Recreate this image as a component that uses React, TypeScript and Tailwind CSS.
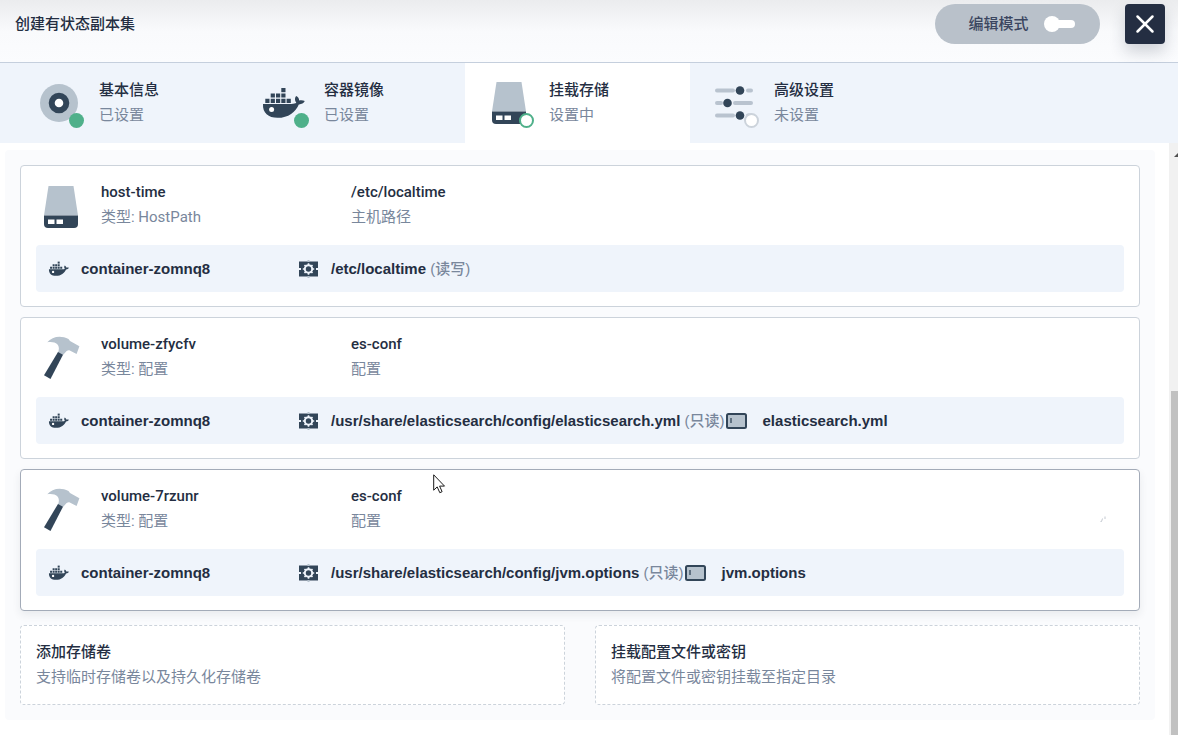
import type { ReactNode } from "react";
import { X } from "lucide-react";

type StepStatus = "done" | "current" | "todo";

const steps: { title: string; desc: string; status: StepStatus; icon: ReactNode }[] = [
  { title: "基本信息", desc: "已设置", status: "done", icon: <InfoIcon /> },
  {
    title: "容器镜像",
    desc: "已设置",
    status: "done",
    icon: <DockerIcon className="w-11 h-[31px] -ml-1" />,
  },
  { title: "挂载存储", desc: "设置中", status: "current", icon: <DiskIcon className="ml-0.5" /> },
  { title: "高级设置", desc: "未设置", status: "todo", icon: <SlidersIcon /> },
];

const volumes = [
  {
    name: "host-time",
    type: "类型: HostPath",
    source: "/etc/localtime",
    sourceDesc: "主机路径",
    icon: "disk",
    path: "/etc/localtime",
    mode: "(读写)",
    file: "",
    hover: false,
  },
  {
    name: "volume-zfycfv",
    type: "类型: 配置",
    source: "es-conf",
    sourceDesc: "配置",
    icon: "hammer",
    path: "/usr/share/elasticsearch/config/elasticsearch.yml",
    mode: "(只读)",
    file: "elasticsearch.yml",
    hover: false,
  },
  {
    name: "volume-7rzunr",
    type: "类型: 配置",
    source: "es-conf",
    sourceDesc: "配置",
    icon: "hammer",
    path: "/usr/share/elasticsearch/config/jvm.options",
    mode: "(只读)",
    file: "jvm.options",
    hover: true,
  },
];

const actions = [
  { title: "添加存储卷", desc: "支持临时存储卷以及持久化存储卷" },
  { title: "挂载配置文件或密钥", desc: "将配置文件或密钥挂载至指定目录" },
];

const statusClass: Record<StepStatus, string> = {
  done: "bg-[#4fb08a]",
  current: "bg-white border-2 border-[#4fb08a]",
  todo: "bg-white border-2 border-[#ccd3db]",
};

function InfoIcon() {
  return (
    <svg width="38" height="38" viewBox="0 0 38 38">
      <circle cx="19" cy="19" r="19" fill="#b6c2cd" />
      <circle cx="19" cy="19" r="7.3" fill="#fff" stroke="#324558" strokeWidth="6" />
    </svg>
  );
}

function DockerIcon({ className = "" }: { className?: string }) {
  return (
    <svg className={`shrink-0 ${className}`} viewBox="0 0 44 31" fill="#324558">
      <path d="M20.3 0h4.2v4.2h-4.2z" />
      <path d="M9.7 5.4h4.2v4.2H9.7zM15 5.4h4.2v4.2H15zM20.3 5.4h4.2v4.2h-4.2z" />
      <path d="M4.3 10.7h4.2v4.2H4.3zM9.7 10.7h4.2v4.2H9.7zM15 10.7h4.2v4.2H15zM20.3 10.7h4.2v4.2h-4.2zM25.6 10.7h4.2v4.2h-4.2z" />
      <path d="M2 16h28.5c2.2 0 3.9-.5 4.8-1.2-1.8-2.2-1.7-4.8-.2-6.7 2 1 3 2.5 3.1 4.3 2-.5 4-.3 5.6.7-1.2 2.3-3.4 3.4-6 3.3C34.6 24 27.5 29.8 16.5 29.8 7.5 29.8 1.400 25 2 16z" />
      <circle cx="10.6" cy="21.6" r="2.500" fill="#fff" />
    </svg>
  );
}

function DiskIcon({ className = "" }: { className?: string }) {
  return (
    <svg className={className} width="34" height="42" viewBox="0 0 34 42">
      <path d="M4.5 0h25L34 29.5H0z" fill="#b6c2cd" />
      <path d="M0 29.5h34V38a4 4 0 0 1-4 4H4a4 4 0 0 1-4-4z" fill="#324558" />
      <path d="M4 33.5h6.500v4.500H4zM12.500 33.500H19v4.500h-6.500z" fill="#fff" />
    </svg>
  );
}

function SlidersIcon() {
  return (
    <svg width="38" height="36" viewBox="0 0 38 36">
      <g stroke="#b9c3cf" strokeWidth="4" strokeLinecap="round">
        <path d="M2 5.500h16M33 5.500h3M2 18h4M20 18h16M2 30.500h16M33 30.500h3" />
      </g>
      <g fill="#324558">
        <circle cx="25" cy="5.500" r="4.300" />
        <circle cx="12.500" cy="18" r="4.300" />
        <circle cx="25" cy="30.500" r="4.300" />
      </g>
    </svg>
  );
}

function HammerIcon() {
  return (
    <svg className="ml-0.5" width="36" height="43" viewBox="0 0 36 43">
      <path
        d="M3.300 6.300C8 .8 16.500-1 24.500 3l1.500 2 9.400 5.300-2.800 7.700-7.300-3.700c-1.500-.3-2.600.7-3.600 1.700l-2.700 3-5-2.500C16 12 15.500 4.800 3.300 6.300z"
        fill="#b6c2cd"
      />
      <path d="M14 16l5 2.700L6.500 43 0 39.200z" fill="#324558" />
    </svg>
  );
}

function MountIcon() {
  return (
    <svg className="shrink-0" width="20" height="18" viewBox="0 0 20 18">
      <path d="M0 1.500h19v15H0z" fill="#324558" />
      <path d="M8.500 0h2v2h-2zM8.500 16h2v2h-2z" fill="#b6c2cd" />
      <path d="M0 8h2v2H0zM17 8h2v2h-2z" fill="#eff4fb" />
      <circle cx="9.500" cy="9" r="3.700" fill="none" stroke="#eff4fb" strokeWidth="2" />
      <path
        d="M9.500 3.300v2M9.500 12.700v2M3.800 9h2M13.200 9h2M5.500 5l1.400 1.400M12.100 11.600l1.400 1.400M5.500 13l1.400-1.400M12.100 6.400L13.500 5"
        stroke="#eff4fb"
        strokeWidth="1.600"
      />
    </svg>
  );
}

function FileIcon() {
  return (
    <svg className="ml-px shrink-0" width="21" height="16" viewBox="0 0 21 16">
      <rect x="1" y="1" width="19" height="14" rx="1.500" fill="#b6c2cd" stroke="#324558" strokeWidth="2" />
      <path d="M5 5v5" stroke="#324558" strokeWidth="1.300" />
    </svg>
  );
}

function Cursor() {
  return (
    <svg className="absolute left-[433px] top-[474px]" width="13" height="20" viewBox="0 0 13 20">
      <path
        d="M.7.8v15.400l3.500-3.300 2.600 5.800 2.300-1-2.500-5.600h4.900z"
        fill="#fff"
        stroke="#1b1b1b"
        strokeWidth="1"
      />
    </svg>
  );
}

export default function App() {
  return (
    <div className="relative flex h-screen flex-col overflow-hidden bg-white font-[Roboto,'Noto_Sans_CJK_SC',sans-serif] text-[15px] leading-[25px] text-[#242e42]">
      <header className="flex h-[63px] shrink-0 items-start border-b border-[#c5cfdd] bg-linear-to-b from-[#ebecee] via-[#f9fafc] via-50% to-[#fbfcfe] pt-1 pr-[13px] pl-[15px]">
        <h1 className="mt-2 font-medium">创建有状态副本集</h1>
        <label className="ml-auto flex h-10 w-[165px] items-center justify-center gap-[15px] rounded-full bg-[#b9c1ca] pl-2 font-medium text-[#3b4660]">
          编辑模式
          <span className="relative flex h-4 w-[31px] items-center">
            <input type="checkbox" role="switch" className="absolute inset-0 appearance-none" />
            <span className="ml-1 h-2 flex-1 rounded-sm bg-white" />
            <span className="absolute left-0 size-4 rounded-full bg-white" />
          </span>
        </label>
        <button
          type="button"
          aria-label="关闭"
          className="ml-[25px] flex size-10 items-center justify-center rounded bg-[#242e42] text-white shadow-[0_8px_16px_rgba(36,46,66,0.2)]"
        >
          <X size={30} strokeWidth={2} />
        </button>
      </header>

      <nav className="flex h-20 shrink-0 bg-[#eff4fb] pl-[15px]">
        {steps.map((s) => (
          <button
            key={s.title}
            type="button"
            className={`flex w-[225px] items-center gap-[15px] pl-[25px] text-left ${
              s.status === "current" ? "bg-white" : ""
            }`}
          >
            <span className="relative flex h-[50px] w-11 items-center">
              {s.icon}
              <span className={`absolute right-0 bottom-0 size-[15px] rounded-full ${statusClass[s.status]}`} />
            </span>
            <span>
              <span className="block font-medium">{s.title}</span>
              <span className="block text-[#79879c]">{s.desc}</span>
            </span>
          </button>
        ))}
      </nav>

      <div className="flex min-h-0 flex-1">
        <main className="min-w-0 flex-1 pt-[7px] pr-[14px] pl-[5px]">
          <div className="rounded bg-[#fafbfd] p-[15px]">
            <div className="flex flex-col gap-2.5">
              {volumes.map((v) => (
                <section
                  key={v.name}
                  className={`rounded border bg-white px-[15px] py-[14px] ${
                    v.hover ? "border-[#a3abb8] shadow-[0_4px_8px_rgba(36,46,66,0.08)]" : "border-[#ccd3db]"
                  }`}
                >
                  <div className="mb-[15px] flex h-[50px] items-center">
                    <div className="mr-[15px] flex w-[50px] justify-center">
                      {v.icon === "disk" ? <DiskIcon className="mt-1" /> : <HammerIcon />}
                    </div>
                    <div className="w-[250px]">
                      <div className="font-medium">{v.name}</div>
                      <div className="text-[#79879c]">{v.type}</div>
                    </div>
                    <div>
                      <div className="font-medium">{v.source}</div>
                      <div className="text-[#79879c]">{v.sourceDesc}</div>
                    </div>
                    {v.hover && (
                      <svg className="mt-5 mr-[18px] ml-auto" width="6" height="6" viewBox="0 0 6 6">
                        <path d="M.5 5.500h1l1-3M5 .5v2.500" fill="none" stroke="#b4bac4" strokeWidth=".8" />
                      </svg>
                    )}
                  </div>
                  <div className="flex h-[47px] items-center rounded bg-[#eff4fb] pl-3 font-['Liberation_Sans','Noto_Sans_CJK_SC',sans-serif] font-bold">
                    <div className="flex w-[251px] items-center gap-3">
                      <DockerIcon className="h-4 w-[21px]" />
                      <span>container-zomnq8</span>
                    </div>
                    <MountIcon />
                    <span className="ml-3">
                      {v.path} <span className="font-medium text-[#79879c]">{v.mode}</span>
                    </span>
                    {v.file && (
                      <>
                        <FileIcon />
                        <span className="ml-4">{v.file}</span>
                      </>
                    )}
                  </div>
                </section>
              ))}
            </div>

            <div className="mt-[14px] grid grid-cols-2 gap-[30px]">
              {actions.map((a) => (
                <button
                  key={a.title}
                  type="button"
                  className="rounded border border-dashed border-[#ccd3db] bg-white px-[15px] py-[14px] text-left"
                >
                  <span className="block font-medium">{a.title}</span>
                  <span className="block text-[#79879c]">{a.desc}</span>
                </button>
              ))}
            </div>
          </div>
        </main>

        {/* scrollbar */}
        <div className="flex w-[9px] flex-col items-end bg-[#f1f1f1]">
          <svg className="mt-2.5" width="4" height="4" viewBox="0 0 4 4">
            <path d="M4 0v4H0z" fill="#505050" />
          </svg>
          <div className="mt-[234px] w-[7px] flex-1 bg-[#c1c1c1]" />
        </div>
      </div>

      <Cursor />
    </div>
  );
}
